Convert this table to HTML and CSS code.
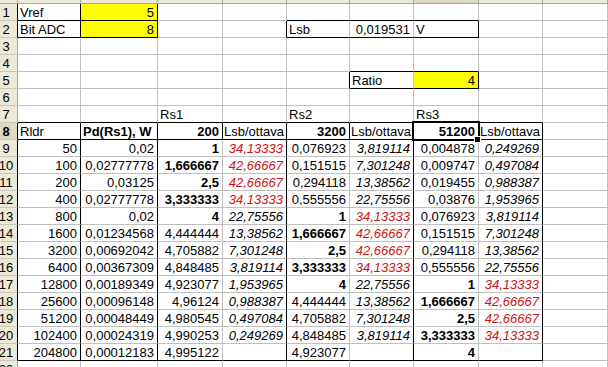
FILE: index.html
```html
<!DOCTYPE html>
<html>
<head>
<meta charset="utf-8">
<link rel="stylesheet" href="styles.css">
</head>
<body>
<table class="sheet">
<colgroup>
<col class="w-rh"><col class="w-a"><col class="w-b"><col class="w-c"><col class="w-d"><col class="w-e"><col class="w-f"><col class="w-g"><col class="w-h"><col class="w-i">
</colgroup>
<tr class="strip"><td class="ch corner"></td><td class="ch"></td><td class="ch"></td><td class="ch"></td><td class="ch"></td><td class="ch"></td><td class="ch"></td><td class="ch chsel"></td><td class="ch"></td><td class="ch"></td></tr>
<tr><td class="rh kr"><div class="rn">1</div></td><td class="kr kb">Vref</td><td class="y r kr kb">5</td><td></td><td></td><td class="kb"></td><td class="kb"></td><td class="kb"></td><td></td><td></td></tr>
<tr><td class="rh kr"><div class="rn">2</div></td><td class="kr kb">Bit ADC</td><td class="y r kr kb">8</td><td></td><td class="kr"></td><td class="kb">Lsb</td><td class="r kb">0,019531</td><td class="kr kb">V</td><td></td><td></td></tr>
<tr><td class="rh"><div class="rn">3</div></td><td></td><td></td><td></td><td></td><td></td><td></td><td></td><td></td><td></td></tr>
<tr><td class="rh"><div class="rn">4</div></td><td></td><td></td><td></td><td></td><td></td><td class="kb"></td><td class="kb"></td><td></td><td></td></tr>
<tr><td class="rh"><div class="rn">5</div></td><td></td><td></td><td></td><td></td><td class="kr"></td><td class="kb">Ratio</td><td class="y r kr kb">4</td><td></td><td></td></tr>
<tr><td class="rh"><div class="rn">6</div></td><td></td><td></td><td></td><td></td><td></td><td></td><td></td><td></td><td></td></tr>
<tr><td class="rh"><div class="rn">7</div></td><td class="kb"></td><td class="kb"></td><td class="kb">Rs1</td><td class="kb"></td><td class="kb">Rs2</td><td class="kb"></td><td class="kb">Rs3</td><td class="kb"></td><td></td></tr>
<tr><td class="rh rhsel kr"><div class="rn">8</div></td><td class="kr kb">Rldr</td><td class="b kr kb">Pd(Rs1), W</td><td class="b r kr kb">200</td><td class="lo kr kb">Lsb/ottava</td><td class="b r kr kb">3200</td><td class="lo kr kb">Lsb/ottava</td><td class="b r kr kb active">51200<div class="selbox"></div><div class="handle"></div></td><td class="lo kr kb">Lsb/ottava</td><td></td></tr>
<tr><td class="rh kr"><div class="rn">9</div></td><td class="r kr">50</td><td class="r kr">0,02</td><td class="r b">1</td><td class="r i red kr">34,13333</td><td class="r">0,076923</td><td class="r i kr">3,819114</td><td class="r">0,004878</td><td class="r i kr">0,249269</td><td></td></tr>
<tr><td class="rh kr"><div class="rn">10</div></td><td class="r kr">100</td><td class="r kr">0,02777778</td><td class="r b">1,666667</td><td class="r i red kr">42,66667</td><td class="r">0,151515</td><td class="r i kr">7,301248</td><td class="r">0,009747</td><td class="r i kr">0,497084</td><td></td></tr>
<tr><td class="rh kr"><div class="rn">11</div></td><td class="r kr">200</td><td class="r kr">0,03125</td><td class="r b">2,5</td><td class="r i red kr">42,66667</td><td class="r">0,294118</td><td class="r i kr">13,38562</td><td class="r">0,019455</td><td class="r i kr">0,988387</td><td></td></tr>
<tr><td class="rh kr"><div class="rn">12</div></td><td class="r kr">400</td><td class="r kr">0,02777778</td><td class="r b">3,333333</td><td class="r i red kr">34,13333</td><td class="r">0,555556</td><td class="r i kr">22,75556</td><td class="r">0,03876</td><td class="r i kr">1,953965</td><td></td></tr>
<tr><td class="rh kr"><div class="rn">13</div></td><td class="r kr">800</td><td class="r kr">0,02</td><td class="r b">4</td><td class="r i kr">22,75556</td><td class="r b">1</td><td class="r i red kr">34,13333</td><td class="r">0,076923</td><td class="r i kr">3,819114</td><td></td></tr>
<tr><td class="rh kr"><div class="rn">14</div></td><td class="r kr">1600</td><td class="r kr">0,01234568</td><td class="r">4,444444</td><td class="r i kr">13,38562</td><td class="r b">1,666667</td><td class="r i red kr">42,66667</td><td class="r">0,151515</td><td class="r i kr">7,301248</td><td></td></tr>
<tr><td class="rh kr"><div class="rn">15</div></td><td class="r kr">3200</td><td class="r kr">0,00692042</td><td class="r">4,705882</td><td class="r i kr">7,301248</td><td class="r b">2,5</td><td class="r i red kr">42,66667</td><td class="r">0,294118</td><td class="r i kr">13,38562</td><td></td></tr>
<tr><td class="rh kr"><div class="rn">16</div></td><td class="r kr">6400</td><td class="r kr">0,00367309</td><td class="r">4,848485</td><td class="r i kr">3,819114</td><td class="r b">3,333333</td><td class="r i red kr">34,13333</td><td class="r">0,555556</td><td class="r i kr">22,75556</td><td></td></tr>
<tr><td class="rh kr"><div class="rn">17</div></td><td class="r kr">12800</td><td class="r kr">0,00189349</td><td class="r">4,923077</td><td class="r i kr">1,953965</td><td class="r b">4</td><td class="r i kr">22,75556</td><td class="r b">1</td><td class="r i red kr">34,13333</td><td></td></tr>
<tr><td class="rh kr"><div class="rn">18</div></td><td class="r kr">25600</td><td class="r kr">0,00096148</td><td class="r">4,96124</td><td class="r i kr">0,988387</td><td class="r">4,444444</td><td class="r i kr">13,38562</td><td class="r b">1,666667</td><td class="r i red kr">42,66667</td><td></td></tr>
<tr><td class="rh kr"><div class="rn">19</div></td><td class="r kr">51200</td><td class="r kr">0,00048449</td><td class="r">4,980545</td><td class="r i kr">0,497084</td><td class="r">4,705882</td><td class="r i kr">7,301248</td><td class="r b">2,5</td><td class="r i red kr">42,66667</td><td></td></tr>
<tr><td class="rh kr"><div class="rn">20</div></td><td class="r kr">102400</td><td class="r kr">0,00024319</td><td class="r">4,990253</td><td class="r i kr">0,249269</td><td class="r">4,848485</td><td class="r i kr">3,819114</td><td class="r b">3,333333</td><td class="r i red kr">34,13333</td><td></td></tr>
<tr><td class="rh kr"><div class="rn">21</div></td><td class="r kr kb">204800</td><td class="r kr kb">0,00012183</td><td class="r kb">4,995122</td><td class="i kr kb"></td><td class="r kb">4,923077</td><td class="i kr kb"></td><td class="r b kb">4</td><td class="i kr kb"></td><td></td></tr>
<tr><td class="rh"><div class="rn">22</div></td><td></td><td></td><td></td><td></td><td></td><td></td><td></td><td></td><td></td></tr>
</table>
</body>
</html>
```
FILE: styles.css
```css
html, body {
  margin: 0;
  padding: 0;
  background: #ffffff;
  overflow: hidden;
  width: 608px;
  height: 367px;
}

.sheet {
  table-layout: fixed;
  border-collapse: separate;
  border-spacing: 0;
  width: 608px;
  font-family: "Liberation Sans", Arial, sans-serif;
  font-size: 13px;
  color: #000000;
}

.w-rh { width: 18px; }
.w-a { width: 63px; }
.w-b { width: 77px; }
.w-c { width: 65px; }
.w-d { width: 64px; }
.w-e { width: 63px; }
.w-f { width: 64px; }
.w-g { width: 65px; }
.w-h { width: 64px; }
.w-i { width: 65px; }

.sheet tr { height: 17px; }

.sheet td {
  border-right: 1px solid #c0c0c0;
  border-bottom: 1px solid #c0c0c0;
  padding: 1px 3px 0 2px;
  line-height: 15px;
  height: 15px;
  vertical-align: bottom;
  white-space: nowrap;
  text-align: left;
}

.sheet tr.strip { height: 4px; }
.sheet td.ch {
  height: 3px;
  padding: 0;
  line-height: 0;
  font-size: 0;
  background: #ece9d8;
  border-right: 1px solid #aca899;
  border-bottom: 1px solid #aca899;
}
.sheet td.chsel { background: #ddd9c3; }

.sheet td.rh {
  background: #ece9d8;
  border-right: 1px solid #aca899;
  border-bottom: 1px solid #cbc7b8;
  padding: 1px 0 0 0;
  overflow: hidden;
}
.sheet td.rhsel { background: #ddd9c3; font-weight: bold; }

.rn {
  width: 28px;
  margin-left: -8px;
  text-align: center;
}

.sheet td.r { text-align: right; }
.sheet td.b { font-weight: bold; }
.sheet td.i { font-style: italic; }
.sheet td.red { color: #cc1414; }
.sheet td.y { background: #ffff00; }
.sheet td.lo { padding-left: 1px; padding-right: 0; }

.sheet td.kr { border-right-color: #000000; }
.sheet td.kb { border-bottom-color: #000000; }

.sheet td.active { position: relative; }

.selbox {
  position: absolute;
  left: -2px;
  top: -2px;
  right: -2px;
  bottom: -2px;
  border: 2px solid #000000;
}

.handle {
  position: absolute;
  right: -3px;
  bottom: -4px;
  width: 5px;
  height: 5px;
  background: #000000;
  border: 1px solid #ffffff;
}
```
